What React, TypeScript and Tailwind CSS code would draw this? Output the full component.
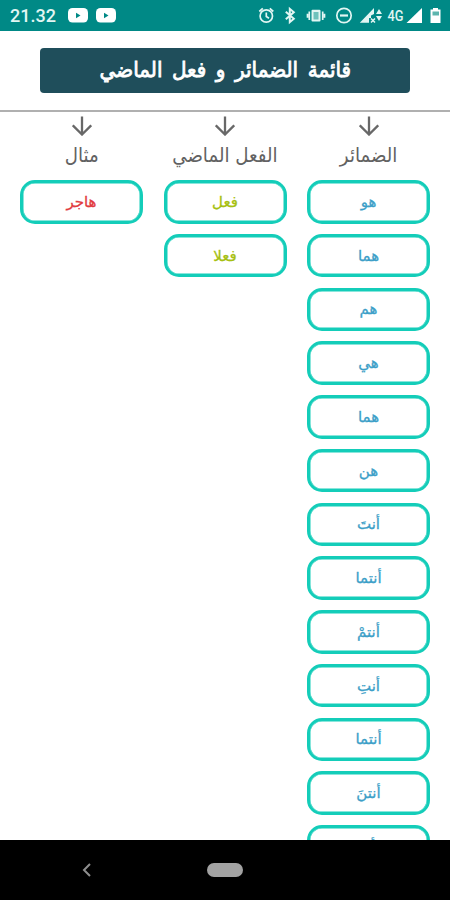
import type { ReactNode } from 'react'

const pronouns = ['هو', 'هما', 'هم', 'هي', 'هما', 'هن', 'أنتَ', 'أنتما', 'أنتمْ', 'أنتِ', 'أنتما', 'أنتنَ', 'أنا']

const columns = [
  { title: 'الضمائر', items: pronouns, color: 'text-[#3d9fc8]' },
  { title: 'الفعل الماضي', items: ['فعل', 'فعلا'], color: 'text-[#a6c010]' },
  { title: 'مثال', items: ['هاجر'], color: 'text-[#e23a40]' },
]

function YoutubeIcon() {
  return (
    <svg width="20" height="15" viewBox="0 0 20 15">
      <rect width="20" height="14.5" rx="4.5" fill="#fff" />
      <path d="M8 4.7v5.600l4.500-2.800z" fill="#008986" />
    </svg>
  )
}

function StatusBar() {
  return (
    <div className="flex h-[30.5px] shrink-0 items-center bg-[#008986] text-[#e2f6f3]">
      <span className="ml-[10px] w-[57.5px] pt-[2px] font-[Roboto] text-[18px] leading-[30px] font-medium">21.32</span>
      <div className="flex gap-[8px]">
        <YoutubeIcon />
        <YoutubeIcon />
      </div>
      <svg className="ml-auto" width="192" height="30" viewBox="258 0 192 30" fill="none" stroke="currentColor" strokeWidth="1.7">
        {/* alarm */}
        <circle cx="266.3" cy="16" r="6.2" />
        <path d="M266.3 12.500v4l2.700 1.800M259.300 11.500l3.500-3.200M273.300 11.500l-3.500-3.200" />
        {/* bluetooth */}
        <path d="M285.800 11.800l8 7-4 3.400V8.800l4 3.400-8 7" strokeWidth="2" />
        {/* vibrate */}
        <rect x="311.500" y="9.800" width="9" height="11.800" rx="1" fill="currentColor" stroke="none" />
        <rect x="313.500" y="12" width="5" height="7.500" fill="#6fc2bc" stroke="none" />
        <path d="M309.300 11.500v8.500M322.700 11.500v8.500M307.500 13.800v4M324.500 13.800v4" />
        {/* do not disturb */}
        <circle cx="344" cy="15.500" r="7.200" />
        <path d="M340 15.500h8" strokeWidth="2.200" />
        {/* first signal */}
        <path d="M359.800 22.800L374 8v6l-3 1.500v2.500h-2v4.800z" fill="currentColor" stroke="none" />
        <path d="M371 22.500l4-4M371 18.500l4 4" strokeWidth="1.500" />
        <path d="M376 14l3-5 3 5zM376 16l3 5 3-5z" fill="currentColor" stroke="none" />
        <text x="387.500" y="21.200" fontFamily="Roboto" fontSize="15" fontWeight="500" textLength="16" lengthAdjust="spacingAndGlyphs" fill="currentColor" stroke="none">4G</text>
        <path d="M406.500 23L422 8v15z" fill="#fff" stroke="none" />
        {/* battery */}
        <path d="M430.500 9.500h2.500V8h5v1.500h2.500V23h-10z" fill="#fff" stroke="none" />
        <path d="M432.500 11.500h6.500v4h-6.500z" fill="#5db5ae" stroke="none" />
      </svg>
    </div>
  )
}

function ArrowDown() {
  return (
    <svg className="shrink-0" width="20" height="20" viewBox="0 0 20 20" fill="none" stroke="#686868" strokeWidth="2.3">
      <path d="M10 .5v17.500M.8 9.300L10 18.500l9.200-9.200" />
    </svg>
  )
}

function Card({ color, children }: { color: string; children: ReactNode }) {
  return (
    <div
      className={`flex h-[43.5px] shrink-0 items-center justify-center rounded-[15px] border-[3px] border-[#14cdb9] text-[15px] leading-[20px] shadow-[inset_0_0_0_0.5px_#14cdb9] ${color}`}
    >
      <span className="[-webkit-text-stroke:0.3px]">{children}</span>
    </div>
  )
}

function NavigationBar() {
  return (
    <div className="grid h-[60px] shrink-0 grid-cols-[173px_104px_173px] items-center justify-items-center bg-black">
      <svg width="10" height="14" viewBox="0 0 10 14" fill="none" stroke="#8e8e8e" strokeWidth="2">
        <path d="M8 1L2 7l6 6" />
      </svg>
      <div className="h-[14px] w-[36px] rounded-full bg-[#a2a2a2]" />
    </div>
  )
}

export default function App() {
  return (
    <div className="flex h-[900px] w-[450px] flex-col overflow-hidden bg-white font-['DejaVu_Sans',sans-serif]">
      <StatusBar />
      <header className="flex h-[81px] shrink-0 justify-center border-b-2 border-[#b0b0b0] pt-[17.5px]">
        <h1
          dir="rtl"
          className="flex h-[45px] w-[370px] items-center justify-center rounded-[4px] bg-[#1f4e5b] text-[21px] text-white"
        >
          <span className="scale-x-[0.95] whitespace-nowrap [word-spacing:3.4px] [-webkit-text-stroke:0.8px]">
            قائمة الضمائر و فعل الماضي
          </span>
        </h1>
      </header>
      <main dir="rtl" className="flex min-h-0 flex-1 justify-between overflow-hidden px-[20px] pt-[4.5px]">
        {columns.map(({ title, items, color }) => (
          <section key={title} className="flex w-[123px] shrink-0 flex-col">
            <div className="flex h-[64px] shrink-0 flex-col items-center">
              <ArrowDown />
              <h2 className="mt-[4px] scale-x-[0.91] text-[20px] leading-[30px] whitespace-nowrap text-[#626262]">{title}</h2>
            </div>
            <div className="flex flex-col gap-[10.25px]">
              {items.map((item, i) => (
                <Card key={i} color={color}>{item}</Card>
              ))}
            </div>
          </section>
        ))}
      </main>
      <NavigationBar />
    </div>
  )
}
